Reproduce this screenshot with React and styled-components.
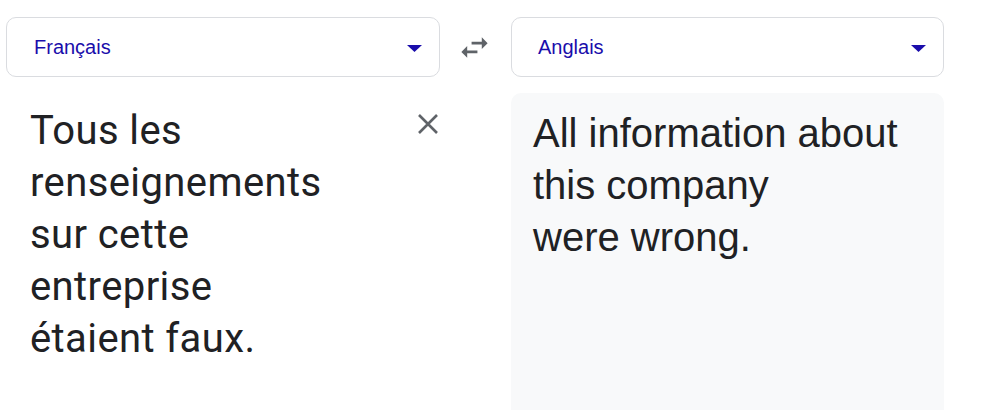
import React from 'react';
import styled, { createGlobalStyle } from 'styled-components';

const GlobalStyle = createGlobalStyle`
  html, body {
    margin: 0;
    padding: 0;
    background: #ffffff;
  }
  body {
    font-family: "Liberation Sans", Arial, sans-serif;
  }
`;

const Page = styled.div`
  display: grid;
  grid-template-columns: 434px 71px 433px;
  grid-template-rows: 60px 330px;
  row-gap: 16px;
  padding: 17px 0 0 6px;
  height: 410px;
  box-sizing: border-box;
  overflow: hidden;
`;

const Select = styled.div`
  display: flex;
  align-items: center;
  justify-content: space-between;
  box-sizing: border-box;
  height: 60px;
  padding: 0 17px 0 ${(p) => p.$padLeft}px;
  border: 1px solid #dadce0;
  border-radius: 10px;
  background: #ffffff;
`;

const SelectLabel = styled.span`
  font-family: "Liberation Sans", Arial, sans-serif;
  font-size: 20px;
  color: #1a0dab;
`;

const Caret = styled.svg`
  display: block;
  width: 15px;
  height: 7px;
  margin-top: 3px;
`;

const SwapCell = styled.div`
  display: flex;
  align-items: center;
  justify-content: center;
  padding-right: 2px;
`;

const SwapIcon = styled.svg`
  display: block;
  width: 35px;
  height: 35px;
`;

const SourcePane = styled.div`
  display: flex;
  align-items: flex-start;
  justify-content: space-between;
  padding: 12px 1px 0 24px;
`;

const SourceText = styled.div`
  font-family: Roboto, "Noto Sans", sans-serif;
  font-size: 40px;
  line-height: 52px;
  letter-spacing: 0.4px;
  color: #202124;
`;

const ClearIcon = styled.svg`
  display: block;
  width: 22px;
  height: 22px;
  margin-top: 8px;
  flex-shrink: 0;
`;

const TargetPane = styled.div`
  grid-column: 3;
  background: #f8f9fa;
  border-radius: 10px 10px 0 0;
  padding: 14px 22px 0 22px;
`;

const TargetText = styled.div`
  font-family: "Liberation Sans", Arial, sans-serif;
  font-size: 40px;
  line-height: 52px;
  color: #202124;
`;

const DropCaret = () => (
  <Caret viewBox="0 0 15 7">
    <polygon points="0,0 15,0 7.5,7" fill="#1a0dab" />
  </Caret>
);

const App = () => {
  return (
    <>
      <GlobalStyle />
      <Page>
        <Select $padLeft={27}>
          <SelectLabel>Français</SelectLabel>
          <DropCaret />
        </Select>
        <SwapCell>
          <SwapIcon viewBox="0 0 24 24">
            <path
              d="M6.99 11L3 15l3.99 4v-3H14v-2H6.99v-3zM21 9l-4-4v3h-7v2h7v3l4-4z"
              fill="#5f6368"
            />
          </SwapIcon>
        </SwapCell>
        <Select $padLeft={26}>
          <SelectLabel>Anglais</SelectLabel>
          <DropCaret />
        </Select>

        <SourcePane>
          <SourceText>
            Tous les
            <br />
            renseignements
            <br />
            sur cette
            <br />
            entreprise
            <br />
            étaient faux.
          </SourceText>
          <ClearIcon viewBox="0 0 22 22">
            <path
              d="M2 2L20 20M20 2L2 20"
              stroke="#5f6368"
              strokeWidth="2.6"
              strokeLinecap="butt"
            />
          </ClearIcon>
        </SourcePane>
        <TargetPane>
          <TargetText>
            All information about
            <br />
            this company
            <br />
            were wrong.
          </TargetText>
        </TargetPane>
      </Page>
    </>
  );
};

export default App;
